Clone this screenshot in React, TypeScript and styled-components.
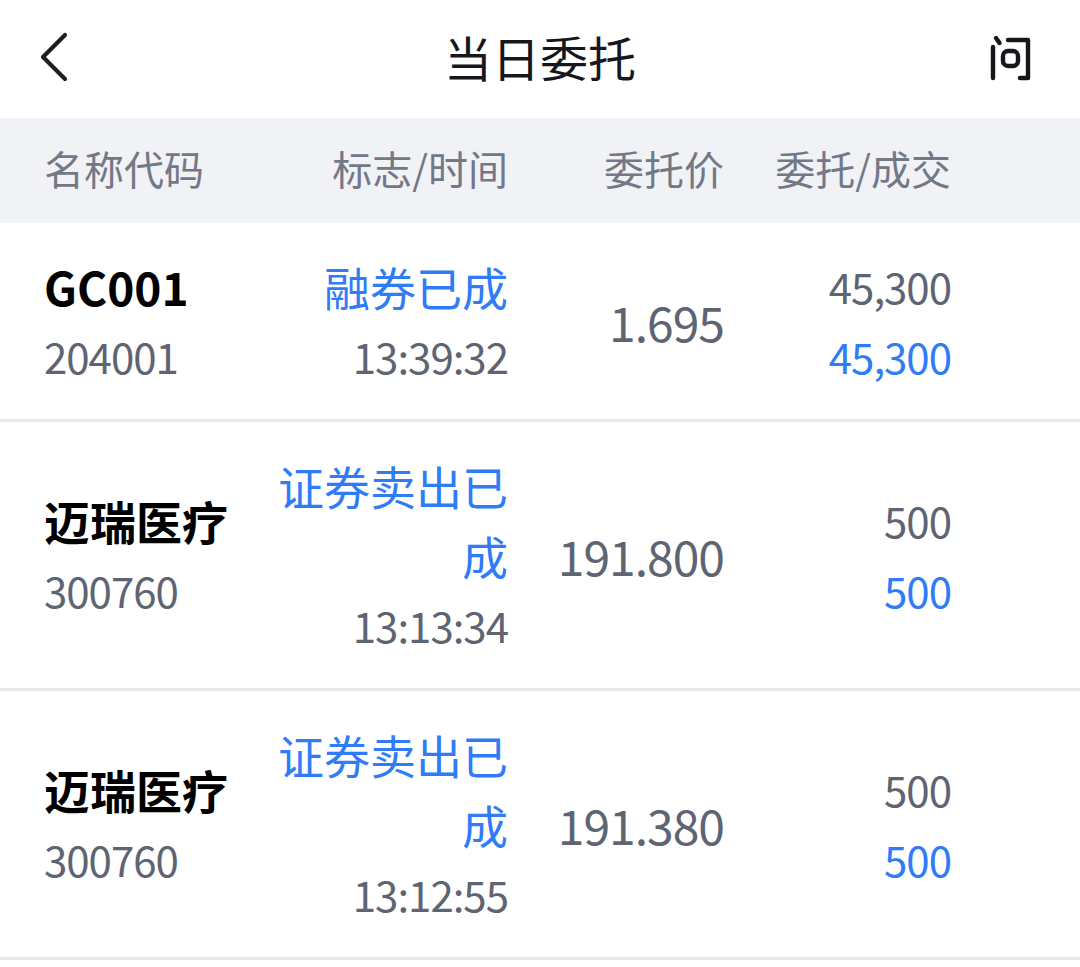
import * as React from "react";
import styled, { createGlobalStyle } from "styled-components";

interface Order {
  name: string;
  code: string;
  flag: string;
  time: string;
  price: string;
  entrust: string;
  deal: string;
}

const orders: Order[] = [
  {
    name: "GC001",
    code: "204001",
    flag: "融券已成",
    time: "13:39:32",
    price: "1.695",
    entrust: "45,300",
    deal: "45,300",
  },
  {
    name: "迈瑞医疗",
    code: "300760",
    flag: "证券卖出已成",
    time: "13:13:34",
    price: "191.800",
    entrust: "500",
    deal: "500",
  },
  {
    name: "迈瑞医疗",
    code: "300760",
    flag: "证券卖出已成",
    time: "13:12:55",
    price: "191.380",
    entrust: "500",
    deal: "500",
  },
];

const GlobalStyle = createGlobalStyle`
  html, body {
    margin: 0;
    padding: 0;
    background: #ffffff;
  }

  body {
    font-family: "Noto Sans CJK SC", "Noto Sans", sans-serif;
    -webkit-font-smoothing: antialiased;
  }
`;

const Page = styled.div`
  width: 1080px;
  min-height: 967px;
  background: #ffffff;
`;

const NavBar = styled.header`
  height: 118px;
  display: grid;
  grid-template-columns: 120px 1fr 120px;
  align-items: center;
`;

const BackButton = styled.button`
  border: none;
  background: none;
  padding: 0 0 4px 36px;
  height: 100%;
  display: flex;
  align-items: center;
  justify-self: start;
`;

const Title = styled.h1`
  margin: 0;
  padding-bottom: 6px;
  text-align: center;
  font-size: 48px;
  font-weight: 400;
  color: #15171c;
  line-height: 112px;
`;

const HelpButton = styled.button`
  border: none;
  background: none;
  padding: 0 44px 2px 0;
  height: 100%;
  display: flex;
  align-items: center;
  justify-self: end;
`;

const columns = `
  display: grid;
  grid-template-columns: 230px 234px 216px 227px;
  padding-left: 44px;
`;

const HeadRow = styled.div`
  ${columns}
  height: 105px;
  box-sizing: border-box;
  padding-bottom: 6px;
  align-items: center;
  background: #f1f2f6;
  color: #737886;
  font-size: 40px;
  line-height: 56px;
`;

const HeadCell = styled.div<{ $align?: "left" | "right" }>`
  text-align: ${({ $align }) => $align ?? "right"};
  white-space: nowrap;
`;

const Row = styled.div`
  ${columns}
  align-items: center;
  padding-top: 28px;
  padding-bottom: 28px;
  border-bottom: 3px solid #e7e9ed;
  font-size: 46px;
  line-height: 70px;
  color: #5e6472;
`;

const Cell = styled.div<{ $align?: "left" | "right" }>`
  display: flex;
  flex-direction: column;
  align-items: ${({ $align }) => ($align === "left" ? "flex-start" : "flex-end")};
  text-align: ${({ $align }) => $align ?? "right"};
`;

const Name = styled.span`
  font-weight: 700;
  color: #000000;
`;

const Flag = styled.span`
  color: #2f7cf6;
  max-width: 234px;
`;

const Num = styled.span<{ $blue?: boolean; $big?: boolean }>`
  font-size: ${({ $big }) => ($big ? "48px" : "42px")};
  letter-spacing: -1px;
  color: ${({ $blue }) => ($blue ? "#2f7cf6" : "#5e6472")};
`;

const ChevronLeft = () => (
  <svg width="34" height="50" viewBox="0 0 34 50">
    <path
      d="M29 3 L7 25 L29 47"
      fill="none"
      stroke="#1c1e23"
      strokeWidth="4.2"
      strokeLinecap="round"
      strokeLinejoin="round"
    />
  </svg>
);

const HelpIcon = () => (
  <svg width="50" height="50" viewBox="0 0 50 50">
    <g
      fill="none"
      stroke="#15171c"
      strokeWidth="4.4"
      strokeLinecap="round"
      strokeLinejoin="round"
    >
      <path d="M7 14 V45" />
      <path d="M10 5 L13.5 10" />
      <rect x="17" y="18" width="15" height="15" rx="5" />
      <path d="M22 7 H42 V45 H34" />
    </g>
  </svg>
);

const App: React.FC = () => {
  return (
    <>
      <GlobalStyle />
      <Page>
        <NavBar>
          <BackButton aria-label="返回">
            <ChevronLeft />
          </BackButton>
          <Title>当日委托</Title>
          <HelpButton aria-label="问">
            <HelpIcon />
          </HelpButton>
        </NavBar>

        <HeadRow>
          <HeadCell $align="left">名称代码</HeadCell>
          <HeadCell>标志/时间</HeadCell>
          <HeadCell>委托价</HeadCell>
          <HeadCell>委托/成交</HeadCell>
        </HeadRow>

        {orders.map((item, index) => (
          <Row key={index}>
            <Cell $align="left">
              <Name>{item.name}</Name>
              <Num>{item.code}</Num>
            </Cell>
            <Cell>
              <Flag>{item.flag}</Flag>
              <Num>{item.time}</Num>
            </Cell>
            <Cell>
              <Num $big>{item.price}</Num>
            </Cell>
            <Cell>
              <Num>{item.entrust}</Num>
              <Num $blue>{item.deal}</Num>
            </Cell>
          </Row>
        ))}
      </Page>
    </>
  );
};

export default App;
